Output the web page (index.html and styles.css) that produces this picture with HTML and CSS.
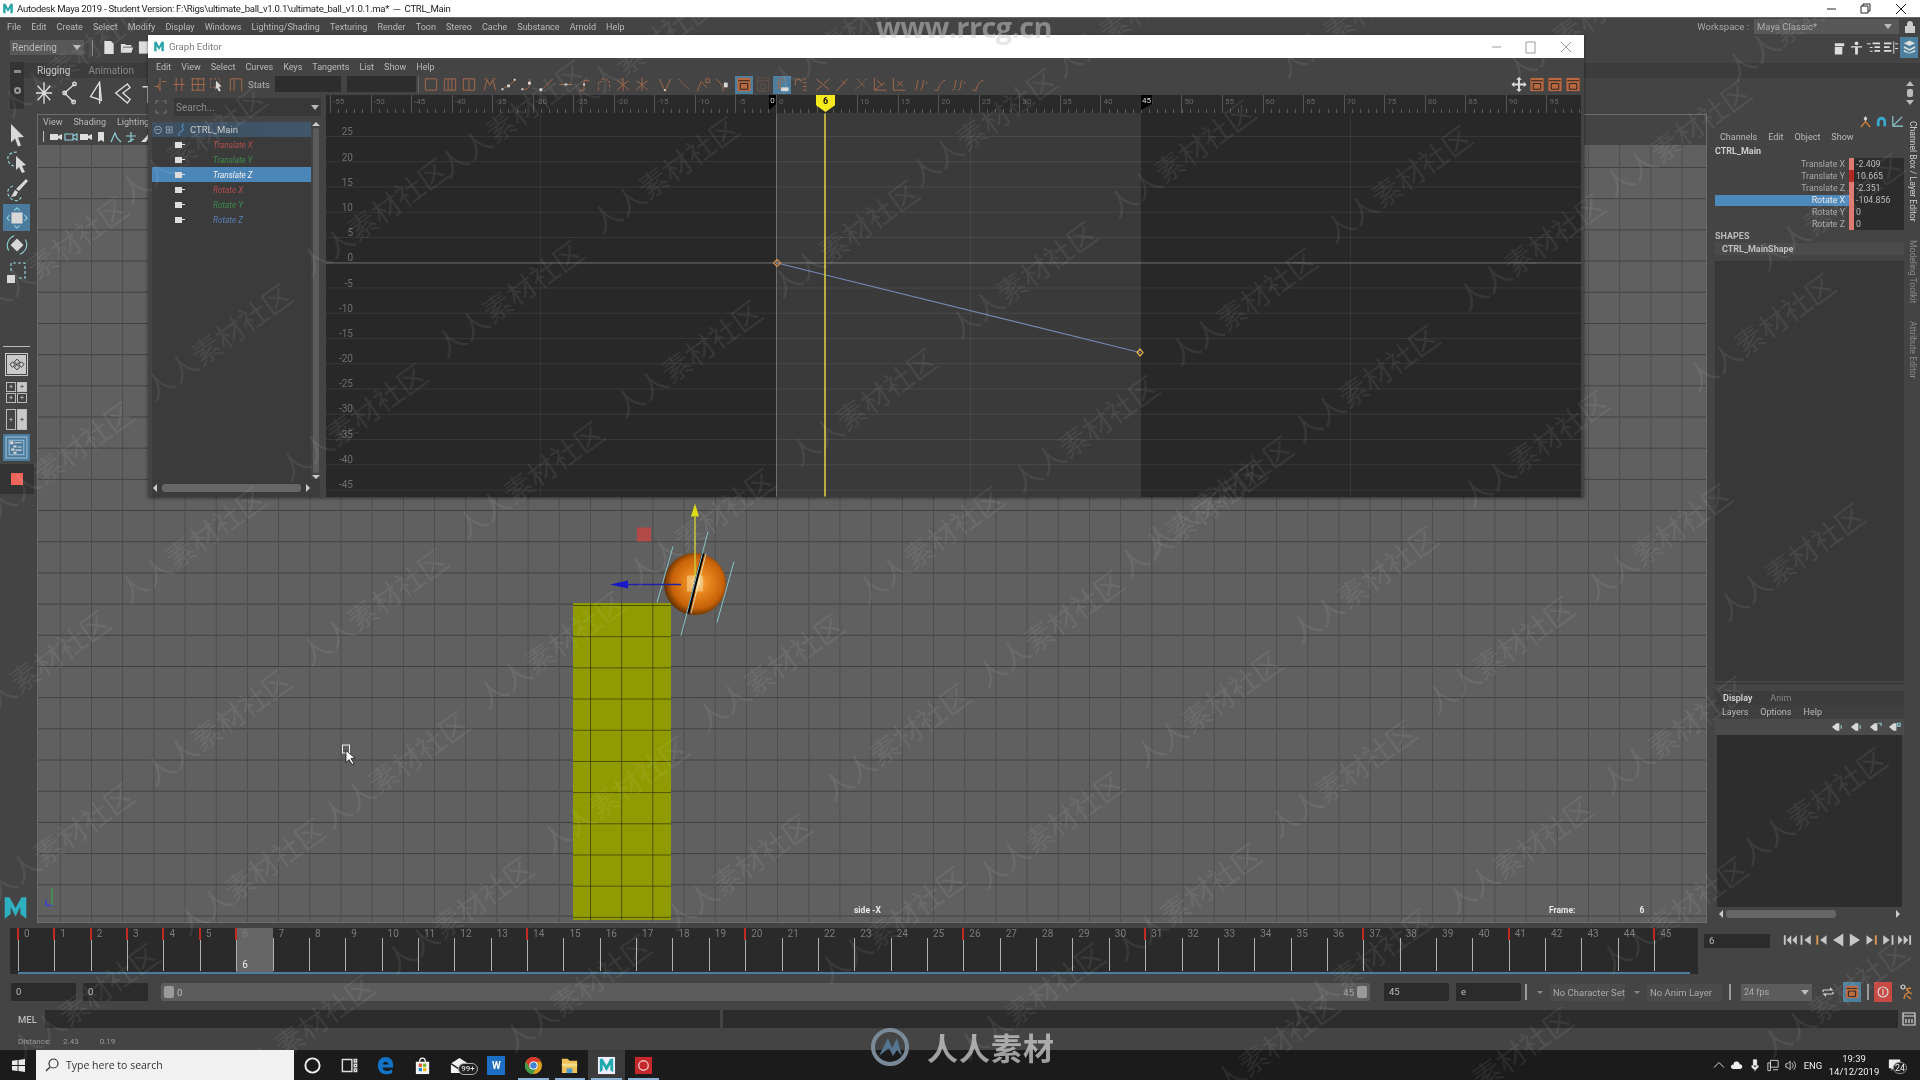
FILE: index.html
```html
<!DOCTYPE html>
<html lang="en">
<head>
<meta charset="utf-8">
<title>Autodesk Maya 2019</title>
<link rel="stylesheet" href="styles.css">
</head>
<body>
<svg class="defs" width="0" height="0">
  <defs>
    <symbol id="maya" viewBox="0 0 20 20"><path d="M2 18V2h4l4 8 4-8h4v16h-4V9l-4 7-4-7v9z"/></symbol>
    <symbol id="a" viewBox="0 0 18 18"><path d="M9 2v14M3 11h5M11 6h5" /><path d="M9 8l-3 3 3 3" /></symbol>
    <symbol id="b" viewBox="0 0 18 18"><path d="M6 2v14M12 2v14M3 9h12"/></symbol>
    <symbol id="c" viewBox="0 0 18 18"><path d="M3 2v14M9 2v14M15 2v14M2 3h14M2 9h14M2 15h14"/></symbol>
    <symbol id="d" viewBox="0 0 18 18"><path d="M2 3h10v9H2z" stroke-dasharray="2 2"/><path class="wf" d="M8 5l6 6-3 .5 2 4-2 1-2-4-1.500 2z"/></symbol>
    <symbol id="e" viewBox="0 0 18 18"><path d="M3 16V3h12v13M7 3v13"/></symbol>
    <symbol id="f" viewBox="0 0 18 18"><path d="M3 3h12v12H3z"/></symbol>
    <symbol id="g" viewBox="0 0 18 18"><path d="M3 3h12v12H3zM7 3v12M11 3v12"/></symbol>
    <symbol id="h" viewBox="0 0 18 18"><path d="M3 3h12v12H3zM9 3v12"/></symbol>
    <symbol id="i" viewBox="0 0 18 18"><path d="M3 15l3-11 3 6 3-6 3 11M3 3h3M12 3h3"/></symbol>
    <symbol id="j" viewBox="0 0 18 18"><path d="M2 14l5-3M10 9l6-5" /><path class="wf" d="M7 9h3v3H7zM1 13h2v2H1zM14 3h2v2h-2z"/></symbol>
    <symbol id="k" viewBox="0 0 18 18"><path d="M2 14h4c3 0 5-3 5-7V3"/><path class="wf" d="M9 6h3v3H9zM2 13h2v2H2z"/></symbol>
    <symbol id="l" viewBox="0 0 18 18"><path d="M3 15L15 3"/><path class="wf" d="M1 13h3v3H1z"/></symbol>
    <symbol id="m" viewBox="0 0 18 18"><path d="M2 9h5M11 9h5"/><path class="wf" d="M7.500 8h3v2h-3z"/></symbol>
    <symbol id="n" viewBox="0 0 18 18"><path d="M3 15h5V5h6"/><path class="wf" d="M7 8h2v2H7z"/></symbol>
    <symbol id="o" viewBox="0 0 18 18"><path d="M3 15V6h4v-3h5v3h3v9" stroke-dasharray="3 2"/></symbol>
    <symbol id="p" viewBox="0 0 18 18"><path d="M9 2v14M3 5l6 4 6-4M3 15l6-6 6 6"/></symbol>
    <symbol id="q" viewBox="0 0 18 18"><path d="M3 3l6 13 6-13"/><path class="wf" d="M8 14h2v2H8z"/></symbol>
    <symbol id="r" viewBox="0 0 18 18"><path d="M3 3l12 12" stroke-dasharray="3 1"/></symbol>
    <symbol id="s" viewBox="0 0 18 18"><path d="M3 16l4-10 7 7M12 3h4v4h-4z"/></symbol>
    <symbol id="t" viewBox="0 0 18 18"><path d="M3 3l7 8v5"/><path class="wf" d="M11 7h4v5h-4z"/></symbol>
    <symbol id="u" viewBox="0 0 18 18"><path d="M3 2h12v14H3z"/><path d="M3 5h12" /><circle cx="9" cy="11" r="3"/></symbol>
    <symbol id="v" viewBox="0 0 18 18"><path d="M5 14V6c0-5 7-5 7 0M7 14V7c0-2 3-2 3 0"/><path class="wf" d="M8 12h8v4H8z"/></symbol>
    <symbol id="w" viewBox="0 0 18 18"><path d="M3 10V6c0-4 6-4 6 0M11 3h4M11 7h4M11 11h4M11 15h4"/></symbol>
    <symbol id="x" viewBox="0 0 18 18"><path d="M2 3l14 12M2 15l6-5M10 8l6-5"/></symbol>
    <symbol id="y" viewBox="0 0 18 18"><path d="M3 16L15 3M9 5l4 4"/></symbol>
    <symbol id="z" viewBox="0 0 18 18"><path d="M3 15L15 3M5 3l8 9" stroke-dasharray="2 1"/></symbol>
    <symbol id="a2" viewBox="0 0 18 18"><path d="M3 2v13h13M3 15l11-8M6 5l6 5"/></symbol>
    <symbol id="a3" viewBox="0 0 18 18"><path d="M3 2v13h13M7 5l6 6M13 5l-6 6"/></symbol>
    <symbol id="a4" viewBox="0 0 18 18"><path d="M2 15c4 0 2-11 5-11M8 15c4 0 2-11 5-11M15 6v2"/></symbol>
    <symbol id="a5" viewBox="0 0 18 18"><path d="M3 15h4c1-6 3-7 5-9l3-2"/></symbol>
    <symbol id="a6" viewBox="0 0 18 18"><path class="of" d="M2 2h14v14H2z"/><path class="bk" d="M3 5h12M5 8h8v6H5z"/></symbol>
  </defs>
</svg>
<div class="app">
  <header class="titlebar">
    <svg class="ico-m"><use href="#maya"/></svg>
    <span class="title-text">Autodesk Maya 2019 - Student Version: F:\Rigs\ultimate_ball_v1.0.1\ultimate_ball_v1.0.1.ma*&nbsp; ---&nbsp; CTRL_Main</span>
    <span class="winbtns">
      <svg width="34" height="14" viewBox="0 0 34 14"><path d="M12 7h9"/></svg>
      <svg width="34" height="14" viewBox="0 0 34 14"><path d="M12 4h7v7h-7zM14 4V2h7v7h-2"/></svg>
      <svg width="36" height="14" viewBox="0 0 36 14"><path d="M13 2l10 10M23 2L13 12"/></svg>
    </span>
  </header>
  <nav class="menubar">
    <span>File</span><span>Edit</span><span>Create</span><span>Select</span><span>Modify</span><span>Display</span><span>Windows</span><span>Lighting/Shading</span><span>Texturing</span><span>Render</span><span>Toon</span><span>Stereo</span><span>Cache</span><span>Substance</span><span>Arnold</span><span>Help</span>
    <div class="workspace">
      <span>Workspace :</span>
      <span class="ws-drop">Maya Classic*<i class="caret"></i></span>
      <svg class="lock" width="12" height="14" viewBox="0 0 12 14"><path d="M3 6V4c0-4 6-4 6 0v2h2v7H1V6z"/></svg>
    </div>
  </nav>
  <section class="status">
    <span class="drop">Rendering<i class="caret"></i></span>
    <i class="vsep"></i>
    <svg class="st-ico" viewBox="0 0 14 16"><path d="M2 1h7l3 3v11H2z"/></svg>
    <svg class="st-ico" viewBox="0 0 16 16"><path d="M1 4h5l1 1h6v2H4l-2 7H1zM4 8h11l-2 6H2z"/></svg>
    <svg class="st-ico" viewBox="0 0 16 16"><path d="M1 1h14v14H1z"/></svg>
    <div class="st-right">
      <svg class="sr-ico" viewBox="0 0 16 16"><path d="M3 3h10v3H3zM3 7h8v8H3z"/></svg>
      <svg class="sr-ico" viewBox="0 0 16 16"><circle cx="8" cy="3" r="2"/><path d="M2 6h12v1.500H9.500V15h-3V7.500H2z"/></svg>
      <svg class="sr-ico" viewBox="0 0 16 16"><path d="M1 3h4v1H1zM7 2h8v2H7zM4 7h3v1H4zM9 6h6v2H9zM7 11h-3v1h3zM9 10h6v2H9z"/></svg>
      <svg class="sr-ico" viewBox="0 0 16 16"><path d="M1 2h8v2H1zM1 6h6v2H1zM1 10h8v2H1zM11 1h1v13h-1zM13 3h3v1h-3zM13 8h3v1h-3z"/></svg>
      <span class="sr-on"><svg class="sr-ico" viewBox="0 0 16 16"><path d="M8 1l6 3-6 3-6-3zM2 7l6 3 6-3v2l-6 3-6-3zM2 11l6 3 6-3v2l-6 2-6-2z"/></svg></span>
    </div>
  </section>
  <section class="shelf">
    <div class="shelf-handle"><i></i><b></b></div>
    <div class="shelf-main">
      <div class="shelf-tabs"><span class="tab-on">Rigging</span><span>Animation</span><span>Rendering</span></div>
      <div class="shelf-icons">
        <svg viewBox="0 0 20 26"><path d="M10 1v24M1 13h18M3 5l14 16M17 5L3 21"/></svg>
        <svg viewBox="0 0 20 26"><path d="M15 3L4 13l10 10"/><circle cx="4" cy="13" r="2"/><circle cx="15" cy="3" r="2"/><circle cx="14" cy="23" r="2"/></svg>
        <svg viewBox="0 0 20 26"><path d="M14 1L4 17l12 4zM14 1v24"/></svg>
        <svg viewBox="0 0 20 26"><path d="M16 3L3 13l13 11 3-4-8-7 8-6z"/></svg>
        <svg viewBox="0 0 20 26"><path d="M4 6h12M10 6v18"/></svg>
      </div>
      <div class="shelf-end">
        <svg width="10" height="26" viewBox="0 0 10 26"><path d="M5 1l4 5H1zM5 25l4-5H1z"/><rect x="2" y="9" width="6" height="8" rx="2"/></svg>
      </div>
    </div>
  </section>

  <main class="main">
    <aside class="toolbox">
      <div class="tool"><svg viewBox="0 0 20 26"><path class="wf" d="M4 2l13 13-6 .5 3 8-3 1-3-8-4 4z"/></svg></div>
      <div class="tool"><svg viewBox="0 0 24 26"><path class="cy" d="M12 3c-7 0-10 4-9 8s4 6 6 6" stroke-dasharray="3 2"/><path class="wf" d="M11 7l10 9-4 1 3 6-3 1-3-6-3 3z"/></svg></div>
      <div class="tool"><svg viewBox="0 0 24 26"><path class="cy" d="M8 9c-7 2-7 10 0 14 5 2 8-1 8-3" stroke-dasharray="3 2"/><path class="wf" d="M21 2l2 2-9 10-3-2zM10 13l3 2-2 4-5 1z"/></svg></div>
      <div class="tool tool-on"><svg viewBox="0 0 26 26"><path class="wf" d="M7 7h12v12H7z"/><path class="cy" d="M10 5l3-3 3 3M10 21l3 3 3-3M5 10l-3 3 3 3M21 10l3 3-3 3"/></svg></div>
      <div class="tool"><svg viewBox="0 0 26 26"><path class="wf" d="M13 6l7 7-7 7-7-7z"/><path class="cy" d="M4 19a11 11 0 0 1 6-16M22 7a11 11 0 0 1-6 16"/></svg></div>
      <div class="tool"><svg viewBox="0 0 24 26"><path class="wf" d="M2 15h8v8H2z"/><path class="cy" d="M6 11V3h14v15h-7" stroke-dasharray="3 2"/></svg></div>
      <i class="tb-sep"></i>
      <div class="pane pane-one"><svg viewBox="0 0 18 12"><path class="bk" d="M9 0l3 3-3 3-3-3zM4 3l3 3-3 3-3-3zM14 3l3 3-3 3-3-3zM9 6l3 3-3 3-3-3z"/></svg></div>
      <div class="pane-four"><i>+</i><b>+</b><i>+</i><i>+</i></div>
      <div class="pane-two"><i>+</i><b>+</b></div>
      <div class="tool-out"><svg viewBox="0 0 22 22"><path class="ol-frame" d="M1 1h20v20H1zM4 4h14v14H4z"/><path class="wf" d="M5 5h3v3H5zM9 6h7v1H9zM8 9h3v2H8zM12 10h4v1h-4zM6 12h3v2H6zM10 13h6v1h-6zM8 15h3v2H8z"/></svg></div>
      <div class="tb-rec"><i></i></div>
      <svg class="logo-m" viewBox="0 0 20 20"><path d="M1 19V1h4l5 9 5-9h4v18l-5-4V9l-4 8-4-8v6z"/></svg>
    </aside>

    <section class="viewport">
      <div class="vp-head">
        <div class="vp-menu"><span>View</span><span>Shading</span><span>Lighting</span></div>
        <div class="vp-tools">
          <i class="vsep2"></i>
          <svg viewBox="0 0 14 12"><path d="M1 3h8v6H1zM9 5l4-2v6l-4-2z"/></svg>
          <svg viewBox="0 0 14 12"><path class="cy" d="M1 3h8v6H1zM9 5l4-2v6l-4-2z"/></svg>
          <svg viewBox="0 0 14 12"><path d="M1 3h8v6H1zM9 5l4-2v6l-4-2z"/></svg>
          <svg viewBox="0 0 14 12"><path d="M4 1h6v10L7 9l-3 2z"/></svg>
          <svg viewBox="0 0 14 12"><path class="cy" d="M2 11l4-9 2 5 4 4"/></svg>
          <svg viewBox="0 0 14 12"><path class="cy" d="M7 1v10M2 5h10M4 11l6-3"/></svg>
          <svg viewBox="0 0 14 12"><path d="M2 11l4-4 5-6 1 3-5 7z"/></svg>
        </div>
      </div>
      <div class="vp-body">
        <div class="cube"></div>
        <svg class="scene" viewBox="38 145 1668 776">
          <defs>
            <radialGradient id="ball" cx="0.54" cy="0.48" r="0.55">
              <stop offset="0" stop-color="#f7d58a"/><stop offset=".25" stop-color="#ee8f22"/><stop offset=".75" stop-color="#c76208"/><stop offset="1" stop-color="#5a2c00"/>
            </radialGradient>
          </defs>
          <rect x="637" y="527" width="14" height="14" fill="#b24a48"/>
          <circle cx="695" cy="583.500" r="31" fill="url(#ball)"/>
          <rect x="687" y="575" width="16" height="16" fill="#f8d9a0" fill-opacity=".55"/>
          <path d="M703 553l-15 60" stroke="#000" stroke-width="3"/>
          <path d="M706 553l-15 60" stroke="#dfe" stroke-width="1" opacity=".7"/>
          <path d="M673 546l-16 56M708 531l-27 104M734 561l-17 61" stroke="#86c5c9" stroke-width="1" fill="none"/>
          <path d="M695 516v60" stroke="#c9c834" stroke-width="1.500"/>
          <path d="M695 503l-4 13h8z" fill="#dcdc16"/>
          <path d="M626 584h55" stroke="#2121a8" stroke-width="1.500"/>
          <path d="M610 584l18-4v8z" fill="#1818c8"/>
          <path d="M52 887v18" stroke="#3c9a4c" stroke-width="1.500"/>
          <path d="M52 905H46v-6" stroke="#3f3fd0" stroke-width="1.500" fill="none"/>
          <rect x="342.500" y="744.500" width="7" height="8" fill="none" stroke="#eee"/>
          <path d="M346 750l0 12 3-3 3 5 2-1-3-5 4-.5z" fill="#fff" stroke="#000" stroke-width=".7"/>
        </svg>
        <span class="vp-cam">side -X</span>
        <span class="vp-frame"><b>Frame:</b><b>6</b></span>
      </div>
    </section>

    <aside class="panel">
      <div class="cb-icons">
        <svg viewBox="0 0 14 14"><path class="wf" d="M7 1l2 3-2 3-2-3z"/><path class="or" d="M2 13l5-6 5 6"/></svg>
        <svg viewBox="0 0 14 14"><path class="cy2" d="M2 12V7a5 5 0 0 1 10 0v5h-3V7a2 2 0 0 0-4 0v5z"/></svg>
        <svg viewBox="0 0 14 14"><path class="cy" d="M2 1v11h11M3 11l9-9"/></svg>
      </div>
      <div class="cb-menu"><span>Channels</span><span>Edit</span><span>Object</span><span>Show</span></div>
      <div class="cb-name">CTRL_Main</div>
      <div class="cb-rows">
        <div class="cb-row"><span class="cb-l">Translate X</span><i class="sw"></i><span class="cb-v">-2.409</span></div>
        <div class="cb-row"><span class="cb-l">Translate Y</span><i class="sw sw-d"></i><span class="cb-v">10.665</span></div>
        <div class="cb-row"><span class="cb-l">Translate Z</span><i class="sw"></i><span class="cb-v">-2.351</span></div>
        <div class="cb-row cb-sel"><span class="cb-l">Rotate X</span><i class="sw"></i><span class="cb-v">-104.856</span></div>
        <div class="cb-row"><span class="cb-l">Rotate Y</span><i class="sw"></i><span class="cb-v">0</span></div>
        <div class="cb-row"><span class="cb-l">Rotate Z</span><i class="sw"></i><span class="cb-v">0</span></div>
      </div>
      <div class="cb-shapes">SHAPES</div>
      <div class="cb-shape">CTRL_MainShape</div>
      <div class="cb-empty"></div>
      <div class="le">
        <div class="le-tabs"><span class="le-on">Display</span><span>Anim</span></div>
        <div class="le-menu"><span>Layers</span><span>Options</span><span>Help</span></div>
        <div class="le-icons">
          <svg viewBox="0 0 14 10"><path class="wf" d="M1 5l5-4h3v8H6z"/><path class="cy" d="M11 3v4"/></svg>
          <svg viewBox="0 0 14 10"><path class="wf" d="M1 5l5-4h3v8H6z"/><path class="cy" d="M11 3v4"/></svg>
          <svg viewBox="0 0 14 10"><path class="wf" d="M1 5l5-4h3v8H6z"/><path class="cy" d="M10 1h3v3"/></svg>
          <svg viewBox="0 0 14 10"><path class="wf" d="M1 5l5-4h3v8H6z"/><path class="cy" d="M10 1h3v3h-3z"/></svg>
        </div>
        <div class="le-list"></div>
        <div class="le-scroll"><i class="arr-l"></i><b></b><i class="arr-r"></i></div>
      </div>
    </aside>

    <aside class="vtabs"><span class="vt-on">Channel Box / Layer Editor</span><span>Modeling Toolkit</span><span>Attribute Editor</span></aside>
  </main>

  <section class="timerow">
    <div class="slider">
      <div class="f k"><em>0</em></div><div class="f k"><em>1</em></div><div class="f k"><em>2</em></div><div class="f k"><em>3</em></div><div class="f k"><em>4</em></div><div class="f k"><em>5</em></div><div class="f k cur"><em>6</em><u>6</u></div><div class="f"><em>7</em></div><div class="f"><em>8</em></div><div class="f"><em>9</em></div><div class="f"><em>10</em></div><div class="f"><em>11</em></div><div class="f"><em>12</em></div><div class="f"><em>13</em></div><div class="f k"><em>14</em></div><div class="f"><em>15</em></div><div class="f"><em>16</em></div><div class="f"><em>17</em></div><div class="f"><em>18</em></div><div class="f"><em>19</em></div><div class="f k"><em>20</em></div><div class="f"><em>21</em></div><div class="f"><em>22</em></div><div class="f"><em>23</em></div><div class="f"><em>24</em></div><div class="f"><em>25</em></div><div class="f k"><em>26</em></div><div class="f"><em>27</em></div><div class="f"><em>28</em></div><div class="f"><em>29</em></div><div class="f"><em>30</em></div><div class="f k"><em>31</em></div><div class="f"><em>32</em></div><div class="f"><em>33</em></div><div class="f"><em>34</em></div><div class="f"><em>35</em></div><div class="f"><em>36</em></div><div class="f k"><em>37</em></div><div class="f"><em>38</em></div><div class="f"><em>39</em></div><div class="f"><em>40</em></div><div class="f k"><em>41</em></div><div class="f"><em>42</em></div><div class="f"><em>43</em></div><div class="f"><em>44</em></div><div class="f k"><em>45</em></div>
    </div>
    <div class="playback">
      <span class="fld frame-fld">6</span>
      <svg class="pb" viewBox="0 0 140 16">
        <path d="M2 3h2v10H2zM10 3v10L5 8zM16 3v10l-5-5zM19 3h0z"/>
        <path d="M20 3h2v10h-2zM31 3v10l-7-5z"/>
        <path class="pb-o" d="M37 3h2v10h-2z"/><path d="M48 3v10l-7-5z"/>
        <path d="M66 1v14l-11-7z"/>
        <path d="M73 1v14l11-7z"/>
        <path d="M91 3v10l7-5z"/><path class="pb-o" d="M100 3h2v10h-2z"/>
        <path d="M109 3v10l7-5zM118 3h2v10h-2z"/>
        <path d="M125 3v10l5-5zM131 3v10l5-5zM137 3h2v10h-2z"/>
      </svg>
    </div>
  </section>

  <section class="rangerow">
    <span class="fld w65">0</span>
    <span class="fld w65">0</span>
    <div class="range"><i class="hd"></i><span>0</span><span class="range-end">45</span><i class="hd"></i></div>
    <span class="fld w65">45</span>
    <span class="fld w65">e</span>
    <i class="rsep rsep-a"></i><i class="mini mini-a"></i>
    <span class="lbl-box">No Character Set</span><i class="mini mini-b"></i>
    <span class="lbl-box">No Anim Layer</span>
    <i class="rsep"></i>
    <span class="fps">24 fps<i class="caret"></i></span>
    <svg class="rg-ico rg-loop" viewBox="0 0 16 16"><path class="wline" d="M3 6h9l-2-2M13 10H4l2 2M3 6v2M13 8v2"/></svg>
    <span class="rg-blue"><svg class="rg-ico" viewBox="0 0 18 18"><use href="#a6"/></svg></span>
    <i class="rsep rsep-c"></i>
    <span class="rg-red"><svg class="rg-ico" viewBox="0 0 16 16"><circle class="wline" cx="8" cy="8" r="5"/><path class="wline" d="M8 5v6"/></svg></span>
    <svg class="rg-ico" viewBox="0 0 16 16"><circle cx="4" cy="3" r="2" class="wline"/><path class="or" d="M7 5l3 3-4 3-1 4M10 8l3 2M7 5l5-1M8 12l4 3"/></svg>
  </section>

  <section class="cmdrow">
    <span class="mel">MEL</span>
    <div class="cmd-in"></div><div class="cmd-out"></div>
    <svg class="rg-ico" viewBox="0 0 16 16"><path class="wline" d="M2 2h12v12H2zM2 5h12M5 8v4M8 8v4M11 8v4"/></svg>
  </section>

  <section class="helprow"><span>Distance:</span><span>2.43</span><span>0.19</span></section>

  <footer class="taskbar">
    <svg class="tb-win" viewBox="0 0 14 14"><path d="M0 2l6-1v5.500H0zM7 1l7-1v6.500H7zM0 7.500h6V13l-6-1zM7 7.500h7V14l-7-1z"/></svg>
    <div class="tb-search">
      <svg width="14" height="14" viewBox="0 0 14 14"><circle cx="8.500" cy="5.500" r="4.500"/><path d="M5 9l-4 4"/></svg>
      <span>Type here to search</span>
    </div>
    <div class="tb-apps">
      <span class="app-i"><svg viewBox="0 0 16 16"><circle cx="8" cy="8" r="6" fill="none" stroke="#eee" stroke-width="1.600"/></svg></span>
      <span class="app-i"><svg viewBox="0 0 16 16"><path d="M2 3h8v10H2zM12 3h2v2h-2zM12 7h2v2h-2zM12 11h2v2h-2z" fill="none" stroke="#ddd" stroke-width="1.200"/></svg></span>
      <span class="app-i"><svg viewBox="0 0 20 20"><path d="M2 10C2 4 6 1 10 1c5 0 8 3 8 9v2H7c0 4 6 5 10 2v4c-6 3-15 1-15-8zm5-1h6c0-4-5-4-6 0z" fill="#1174c8"/></svg></span>
      <span class="app-i"><svg viewBox="0 0 20 20"><path d="M3 6h14v13H3z" fill="#f4f4f4"/><path d="M7 6c0-5 6-5 6 0" fill="none" stroke="#f4f4f4" stroke-width="1.500"/><path d="M6 8h3.500v3.500H6z" fill="#e4572e"/><path d="M10.500 8H14v3.500h-3.500z" fill="#7cb82f"/><path d="M6 12.500h3.500V16H6z" fill="#1e88d6"/><path d="M10.500 12.500H14V16h-3.500z" fill="#f4b400"/></svg></span>
      <span class="app-i app-mail"><svg viewBox="0 0 20 20"><path d="M1 8l9-6 9 6v10H1z" fill="#f2f2f2"/><path d="M1 8l9 6 9-6" fill="none" stroke="#222" stroke-width="1.500"/></svg><b>99+</b></span>
      <span class="app-i app-word"><b>W</b></span>
      <span class="app-i on"><svg viewBox="0 0 20 20"><circle cx="10" cy="10" r="9" fill="#e0a020"/><path d="M10 1a9 9 0 0 0-8 5l4 7 4-7h8a9 9 0 0 0-8-5z" fill="#d63a2f"/><path d="M2 6a9 9 0 0 0 7 13l4-6-7 0z" fill="#3c9a4a"/><circle cx="10" cy="10" r="4" fill="#3d83d8" stroke="#fff" stroke-width="1"/></svg></span>
      <span class="app-i on"><svg viewBox="0 0 20 20"><path d="M2 3h6l2 2h8v13H2z" fill="#eec055"/><path d="M2 8h16v3H2z" fill="#f6dc8c"/><path d="M7 13h6v5H7z" fill="#4a9ad0"/></svg></span>
      <span class="app-i on app-act"><svg viewBox="0 0 20 20"><path d="M1 1h18v18H1z" fill="#eef"/><path d="M3 17V3h3l4 7 4-7h3v14l-3-2V9l-4 7-4-7v6z" fill="#1faab0"/></svg></span>
      <span class="app-i on"><svg viewBox="0 0 20 20"><path d="M1 1h18v18H1z" fill="#c5282a"/><circle cx="10" cy="10" r="5" fill="none" stroke="#f2c4c4" stroke-width="1.400"/></svg></span>
    </div>
    <div class="tray">
      <svg viewBox="0 0 12 12"><path d="M1 8l5-5 5 5" fill="none" stroke="#ddd"/></svg>
      <svg viewBox="0 0 14 12"><path d="M2 10a2.500 2.500 0 0 1 1-5 3.500 3.500 0 0 1 7-.5A2.800 2.800 0 0 1 11 10z" fill="#eee"/></svg>
      <svg viewBox="0 0 10 16"><path d="M3 1h4v9H3zM1 8c0 6 8 6 8 0M5 12v3" fill="#eee" stroke="#eee"/></svg>
      <svg viewBox="0 0 14 14"><path d="M4 1h9v8H4zM1 4h3v9H1zM7 12h6" fill="none" stroke="#ddd"/></svg>
      <svg viewBox="0 0 14 14"><path d="M1 5h2l3-3v10L3 9H1zM8 4c2 2 2 4 0 6M10 2c3 3 3 7 0 10" fill="none" stroke="#ddd"/></svg>
      <span class="eng">ENG</span>
      <span class="clock"><span>19:39</span><span>14/12/2019</span></span>
      <span class="notif"><svg viewBox="0 0 16 16"><path d="M1 1h13v10H6l-2 3v-3H1z" fill="#eee"/></svg><b>24</b></span>
    </div>
  </footer>

  <section class="ge">
    <div class="ge-title">
      <svg class="ico-m"><use href="#maya"/></svg>
      <span>Graph Editor</span>
      <span class="ge-btns">
        <svg width="34" height="14" viewBox="0 0 34 14"><path d="M12 7h9"/></svg>
        <svg width="34" height="14" viewBox="0 0 34 14"><path d="M12 2h9v11h-9z"/></svg>
        <svg width="36" height="14" viewBox="0 0 36 14"><path d="M13 2l10 10M23 2L13 12"/></svg>
      </span>
    </div>
    <div class="ge-menu"><span>Edit</span><span>View</span><span>Select</span><span>Curves</span><span>Keys</span><span>Tangents</span><span>List</span><span>Show</span><span>Help</span></div>
    <div class="ge-tools">
      <svg><use href="#a"/></svg><svg><use href="#b"/></svg><svg><use href="#c"/></svg><svg><use href="#d"/></svg><svg><use href="#e"/></svg>
      <span class="ge-stats">Stats</span><i class="ge-f1"></i><i class="ge-f2"></i><i class="g-sep"></i>
      <svg><use href="#f"/></svg><svg><use href="#g"/></svg><svg><use href="#h"/></svg>
      <svg class="g4"><use href="#i"/></svg><svg><use href="#j"/></svg><svg><use href="#k"/></svg><svg><use href="#l"/></svg><svg><use href="#m"/></svg><svg><use href="#n"/></svg><svg><use href="#o"/></svg><svg><use href="#p"/></svg><svg><use href="#p"/></svg>
      <svg class="g7"><use href="#q"/></svg><svg><use href="#r"/></svg><svg><use href="#s"/></svg><svg><use href="#t"/></svg>
      <span class="g-on g5"><svg><use href="#a6"/></svg></span><svg class="g-dim"><use href="#u"/></svg><span class="g-on"><svg><use href="#v"/></svg></span><svg><use href="#w"/></svg>
      <svg class="g5"><use href="#x"/></svg><svg><use href="#y"/></svg><svg><use href="#z"/></svg><svg><use href="#a2"/></svg><svg><use href="#a3"/></svg>
      <svg class="g5"><use href="#a4"/></svg><svg><use href="#a5"/></svg><svg><use href="#a4"/></svg><svg><use href="#a5"/></svg>
      <div class="ge-tools-r">
        <svg class="wmove" viewBox="0 0 18 18"><path d="M9 1l3 3h-2v4h4V6l3 3-3 3v-2h-4v4h2l-3 3-3-3h2v-4H4v2L1 9l3-3v2h4V4H6z"/></svg>
        <svg><use href="#a6"/></svg><svg><use href="#a6"/></svg><svg><use href="#a6"/></svg>
      </div>
    </div>
    <div class="ge-body">
      <div class="outl">
        <div class="search"><svg width="12" height="14" viewBox="0 0 12 14"><path d="M1 4V1h3M8 1h3v3M11 10v3H8M4 13H1v-3" fill="none" stroke="#777"/></svg><span class="s-in">Search...<i class="caret"></i></span></div>
        <div class="ol-wrap">
          <div class="ol-list">
            <div class="ol-head"><i class="ex">&#8854;</i><i class="ex">&#8862;</i><svg width="10" height="14" viewBox="0 0 10 14"><path d="M7 1C2 3 9 6 5 8S1 12 3 13" fill="none" stroke="#5aa7d6"/></svg><span>CTRL_Main</span></div>
            <div class="ol-row tx"><i class="plug"></i><span>Translate X</span></div>
            <div class="ol-row ty"><i class="plug"></i><span>Translate Y</span></div>
            <div class="ol-row tz"><i class="plug"></i><span>Translate Z</span></div>
            <div class="ol-row tx"><i class="plug"></i><span>Rotate X</span></div>
            <div class="ol-row ty"><i class="plug"></i><span>Rotate Y</span></div>
            <div class="ol-row rz"><i class="plug"></i><span>Rotate Z</span></div>
          </div>
          <div class="ol-vs"><i class="arr-u"></i><b></b><i class="arr-d"></i></div>
        </div>
        <div class="ol-hs"><i class="arr-l"></i><b></b><i class="arr-r"></i></div>
      </div>
      <div class="graph">
        <div class="ruler">
          <span>-55</span><span>-50</span><span>-45</span><span>-40</span><span>-35</span><span>-30</span><span>-25</span><span>-20</span><span>-15</span><span>-10</span><span>-5</span><span>0</span><span>5</span><span>10</span><span>15</span><span>20</span><span>25</span><span>30</span><span>35</span><span>40</span><span>45</span><span>50</span><span>55</span><span>60</span><span>65</span><span>70</span><span>75</span><span>80</span><span>85</span><span>90</span><span>95</span>
          <b class="tag tag0">0</b><b class="tag tag45">45</b><b class="marker">6</b>
        </div>
        <div class="plot">
          <div class="yaxis"><span>25</span><span>20</span><span>15</span><span>10</span><span>5</span><span>0</span><span>-5</span><span>-10</span><span>-15</span><span>-20</span><span>-25</span><span>-30</span><span>-35</span><span>-40</span><span>-45</span></div>
          <svg class="curve" viewBox="326 113 1255 383">
            <path d="M776.500 113v383" stroke="#707070"/>
            <path d="M970.500 113v383M540.500 113v383M1350.500 113v383" stroke="#fff" stroke-opacity=".06"/>
            <path d="M326 262.500h1255" stroke="#fff" stroke-opacity=".28"/>
            <path d="M777 262.500L1140 352" stroke="#7289b4" stroke-width="1.200"/>
            <path d="M825 113v383" stroke="#dccb3c" stroke-width="1.600"/>
            <path d="M777 259l3.500 3.500-3.500 3.500-3.500-3.500z" fill="none" stroke="#d9904a" stroke-width="1.200"/>
            <path d="M1140 348.500l3 3.500-3 3.500-3-3.500z" fill="none" stroke="#e5b04a" stroke-width="1.200"/>
          </svg>
        </div>
      </div>
    </div>
  </section>

  <svg class="wm" viewBox="0 0 1920 1080" aria-hidden="true">
    <g class="wm-g">
      <text transform="translate(73 57) rotate(-36)">人人素材社区</text><text transform="translate(192 143) rotate(-36)">人人素材社区</text><text transform="translate(373 215) rotate(-36)">人人素材社区</text><text transform="translate(53 253) rotate(-36)">人人素材社区</text><text transform="translate(508 297) rotate(-36)">人人素材社区</text><text transform="translate(217 340) rotate(-36)">人人素材社区</text><text transform="translate(687 357) rotate(-36)">人人素材社区</text><text transform="translate(352 420) rotate(-36)">人人素材社区</text><text transform="translate(59 458) rotate(-36)">人人素材社区</text><text transform="translate(529 478) rotate(-36)">人人素材社区</text><text transform="translate(191 543) rotate(-36)">人人素材社区</text><text transform="translate(700 525) rotate(-36)">人人素材社区</text><text transform="translate(373 605) rotate(-36)">人人素材社区</text><text transform="translate(35 667) rotate(-36)">人人素材社区</text><text transform="translate(550 648) rotate(-36)">人人素材社区</text><text transform="translate(929 543) rotate(-36)">人人素材社区</text><text transform="translate(1191 517) rotate(-36)">人人素材社区</text><text transform="translate(1049 627) rotate(-36)">人人素材社区</text><text transform="translate(1363 583) rotate(-36)">人人素材社区</text><text transform="translate(1657 540) rotate(-36)">人人素材社区</text><text transform="translate(217 725) rotate(-36)">人人素材社区</text><text transform="translate(394 768) rotate(-36)">人人素材社区</text><text transform="translate(614 793) rotate(-36)">人人素材社区</text><text transform="translate(769 670) rotate(-36)">人人素材社区</text><text transform="translate(895 740) rotate(-36)">人人素材社区</text><text transform="translate(1207 707) rotate(-36)">人人素材社区</text><text transform="translate(1499 653) rotate(-36)">人人素材社区</text><text transform="translate(1673 733) rotate(-36)">人人素材社区</text><text transform="translate(1341 777) rotate(-36)">人人素材社区</text><text transform="translate(59 840) rotate(-36)">人人素材社区</text><text transform="translate(250 875) rotate(-36)">人人素材社区</text><text transform="translate(458 913) rotate(-36)">人人素材社区</text><text transform="translate(737 870) rotate(-36)">人人素材社区</text><text transform="translate(1049 828) rotate(-36)">人人素材社区</text><text transform="translate(1518 853) rotate(-36)">人人素材社区</text><text transform="translate(891 923) rotate(-36)">人人素材社区</text><text transform="translate(1186 900) rotate(-36)">人人素材社区</text><text transform="translate(1673 913) rotate(-36)">人人素材社区</text><text transform="translate(1357 965) rotate(-36)">人人素材社区</text><text transform="translate(84 1000) rotate(-36)">人人素材社区</text><text transform="translate(300 1031) rotate(-36)">人人素材社区</text><text transform="translate(576 991) rotate(-36)">人人素材社区</text><text transform="translate(1834 997) rotate(-36)">人人素材社区</text><text transform="translate(1264 1050) rotate(-36)">人人素材社区</text><text transform="translate(1030 1000) rotate(-36)">人人素材社区</text><text transform="translate(1498 1064) rotate(-36)">人人素材社区</text><text transform="translate(511 117) rotate(-36)">人人素材社区</text><text transform="translate(664 173) rotate(-36)">人人素材社区</text><text transform="translate(844 33) rotate(-36)">人人素材社区</text><text transform="translate(844 237) rotate(-36)">人人素材社区</text><text transform="translate(982 125) rotate(-36)">人人素材社区</text><text transform="translate(1125 17) rotate(-36)">人人素材社区</text><text transform="translate(1180 157) rotate(-36)">人人素材社区</text><text transform="translate(1397 182) rotate(-36)">人人素材社区</text><text transform="translate(1022 278) rotate(-36)">人人素材社区</text><text transform="translate(1242 305) rotate(-36)">人人素材社区</text><text transform="translate(1530 250) rotate(-36)">人人素材社区</text><text transform="translate(862 405) rotate(-36)">人人素材社区</text><text transform="translate(1084 432) rotate(-36)">人人素材社区</text><text transform="translate(1364 382) rotate(-36)">人人素材社区</text><text transform="translate(1534 447) rotate(-36)">人人素材社区</text><text transform="translate(1218 493) rotate(-36)">人人素材社区</text><text transform="translate(1349 17) rotate(-36)">人人素材社区</text><text transform="translate(1578 23) rotate(-36)">人人素材社区</text><text transform="translate(1676 137) rotate(-36)">人人素材社区</text><text transform="translate(1798 20) rotate(-36)">人人素材社区</text><text transform="translate(1829 210) rotate(-36)">人人素材社区</text><text transform="translate(1760 330) rotate(-36)">人人素材社区</text><text transform="translate(1812 804) rotate(-36)">人人素材社区</text><text transform="translate(1790 560) rotate(-36)">人人素材社区</text><text transform="translate(640 50) rotate(-36)">人人素材社区</text>
    </g>
  </svg>
  <div class="stamp-url">www.rrcg.cn</div>
  <div class="stamp-brand">
    <svg width="44" height="42" viewBox="0 0 44 42"><circle cx="22" cy="21" r="17" fill="none" stroke="#7b8a98" stroke-width="4"/><path d="M11 30l9-18 4 10 5-10 5 18-5-6-4 6-4-8z" fill="#54748f"/></svg>
    <span>人人素材</span>
  </div>
</div>
</body>
</html>
```

FILE: styles.css
```css
* { box-sizing: border-box; }
html, body { margin: 0; height: 100%; overflow: hidden; background: #444; }
body { font-family: Roboto, "Liberation Sans", "Noto Sans CJK SC", sans-serif; font-size: 9px; color: #b9b9b9; }
i, em, u { font-style: normal; text-decoration: none; }
.defs { position: absolute; }
.app { position: relative; width: 1920px; height: 1080px; display: flex; flex-direction: column; background: #444; overflow: hidden; filter: blur(.35px); }

/* shared icon paints */
.wf { fill: #d8d8d8; stroke: none; }
.cy { fill: none; stroke: #8fd0d8; stroke-width: 1.2; }
.cy2 { fill: #39a9c9; stroke: none; }
.or { fill: none; stroke: #d9843c; stroke-width: 1.4; }
.bk { fill: none; stroke: #222; }
.of { fill: #b9683f; stroke: none; }
.wline { fill: none; stroke: #d8d8d8; stroke-width: 1.2; }
.caret { width: 0; height: 0; border-left: 4px solid transparent; border-right: 4px solid transparent; border-top: 5px solid #bbb; }
.fld { background: #2b2b2b; color: #bbb; height: 18px; line-height: 18px; padding-left: 5px; border-radius: 1px; flex: none; font-size: 9.5px; }
.w65 { width: 65px; }

/* title bar */
.titlebar { height: 17px; flex: none; background: #fff; display: flex; align-items: center; color: #222; padding-left: 2px; }
.ico-m { width: 12px; height: 13px; fill: #27a3a8; flex: none; }
.title-text { margin-left: 3px; font-size: 9.6px; letter-spacing: -.28px; white-space: nowrap; }
.winbtns { margin-left: auto; display: flex; margin-right: 1px; }
.winbtns svg { fill: none; stroke: #222; }

/* menu bar */
.menubar { height: 18px; flex: none; display: flex; align-items: center; padding-left: 7px; gap: 10.1px; border-top: 1px solid #666; white-space: nowrap; background: #444; }
.workspace { margin-left: auto; display: flex; align-items: center; gap: 5px; padding-right: 4px; color: #aaa; font-size: 9.5px; }
.ws-drop { width: 145px; height: 15px; background: #585858; display: flex; align-items: center; justify-content: space-between; padding: 0 7px 0 3px; }
.lock { fill: #ccc; }

/* status line */
.status { height: 25px; flex: none; display: flex; align-items: center; padding-left: 10px; }
.drop { width: 74px; height: 15px; background: #585858; display: flex; align-items: center; justify-content: space-between; padding: 0 3px 0 2px; font-size: 10px; }
.vsep { width: 1px; height: 16px; background: #888; margin: 0 9px 0 8px; }
.st-ico { width: 14px; height: 15px; fill: #ddd; margin-right: 4px; }
.st-right { margin-left: auto; display: flex; align-items: center; gap: 2px; padding-right: 2px; }
.sr-ico { width: 15px; height: 16px; fill: #ddd; display: block; }
.sr-on { background: #4d7f9f; padding: 2px; width: 18px; height: 21px; }

/* shelf */
.shelf { height: 53px; flex: none; display: flex; padding: 2px 0 4px 10px; gap: 0; }
.shelf-handle { width: 14px; background: #333; display: flex; flex-direction: column; align-items: center; padding-top: 8px; gap: 14px; flex: none; }
.shelf-handle i { width: 7px; height: 3px; background: #888; }
.shelf-handle b { width: 7px; height: 7px; border-radius: 50%; border: 2px solid #999; }
.shelf-main { flex: 1; display: flex; flex-direction: column; position: relative; padding-left: 0; }
.shelf-tabs { display: flex; gap: 18px; height: 15px; align-items: center; font-size: 10px; color: #888; margin-top: 1px; padding-left: 13px; background: #3c3c3c; }
.tab-on { color: #c8c8c8; }
.shelf-icons { display: flex; gap: 8px; height: 29px; align-items: center; padding-left: 11px; }
.shelf-icons svg { width: 18px; height: 24px; fill: none; stroke: #ddd; stroke-width: 1.5; }
.shelf-end { position: absolute; right: 5px; top: 18px; }
.shelf-end svg { fill: #bbb; }

/* main */
.main { height: 811px; flex: none; display: flex; }
.toolbox { width: 37px; flex: none; display: flex; flex-direction: column; align-items: flex-start; padding: 8px 0 4px 3px; }
.tool { width: 27px; height: 27.6px; display: flex; align-items: center; justify-content: center; }
.tool svg { width: 24px; height: 26px; }
.tool-on { background: #4c7a9c; }
.tb-sep { width: 27px; height: 1px; background: #bbb; margin-top: 59px; }
.pane { width: 21px; height: 21px; margin: 7px 0 0 3px; background: #c9c9c9; border: 1px solid #444; outline: 1px solid #c9c9c9; display: flex; align-items: center; justify-content: center; }
.pane svg { width: 16px; height: 11px; }
.pane-four { width: 22px; display: grid; grid-template-columns: 10px 10px; gap: 1px; margin: 7px 0 0 3px; }
.pane-four i, .pane-four b, .pane-two i, .pane-two b { height: 10px; border: 1px solid #bbb; font-size: 8px; line-height: 8px; text-align: center; font-weight: 400; color: #ccc; }
.pane-four b, .pane-two b { background: #c9c9c9; color: #333; }
.pane-two { width: 22px; display: grid; grid-template-columns: 10px 10px; gap: 1px; margin: 6px 0 0 3px; }
.pane-two i, .pane-two b { height: 21px; line-height: 19px; }
.tool-out { width: 27px; height: 27px; margin-top: 4px; background: #4c7a9c; padding: 2px; }
.tool-out svg { width: 23px; height: 23px; display: block; }
.ol-frame { fill: none; stroke: #9fc3da; }
.tb-rec { width: 34px; margin-left: -3px; height: 30px; margin-top: 3px; background: #333; display: flex; align-items: center; justify-content: center; }
.tb-rec i { width: 12px; height: 12px; background: #f0655a; }
.logo-m { margin-top: auto; width: 25px; height: 24px; fill: #2fb0c0; margin-left: 0; }

/* viewport */
.viewport { width: 1670px; height: 809px; margin-top: 1px; flex: none; display: flex; flex-direction: column; border: 1px solid #6c6c6c; background: #444; }
.vp-head { height: 30px; flex: none; padding-left: 5px; }
.vp-menu { display: flex; gap: 11px; height: 14px; align-items: center; }
.vp-tools { display: flex; gap: 1px; align-items: center; height: 15px; }
.vp-tools svg { width: 14px; height: 12px; fill: #ddd; }
.vsep2 { width: 1px; height: 11px; background: #bbb; margin-right: 4px; }
.vp-body { flex: 1; position: relative; overflow: hidden; background-color: #606060;
  background-image: linear-gradient(90deg, #4c4c4c 1px, transparent 1px), linear-gradient(#404040 1px, transparent 1px);
  background-size: 31.2px 100%, 100% 31.2px; background-position: 21.800px 0, 0 22px; }
.cube { position: absolute; left: 535px; top: 458px; width: 98px; height: 317px; background-color: #8f9b00;
  background-image: linear-gradient(90deg, rgba(50,50,0,.7) 1px, transparent 1px), linear-gradient(rgba(50,50,0,.7) 1px, transparent 1px);
  background-size: 31.2px 100%, 100% 31.2px; background-position: 17px 0, 0 2px; }
.scene { position: absolute; inset: 0; width: 100%; height: 100%; }
.vp-cam { position: absolute; left: 816px; top: 760px; color: #e8e8e8; font-size: 8.500px; font-weight: 700; }
.vp-frame { position: absolute; left: 1511px; top: 760px; display: flex; gap: 64px; color: #e8e8e8; font-size: 8.500px; }

/* right panel */
.panel { width: 194px; flex: none; margin-left: 4px; padding: 0 1px 0 4px; display: flex; flex-direction: column; }
.cb-icons { display: flex; justify-content: flex-end; gap: 3px; height: 15px; padding: 1px 0 0; margin-top: 1px; }
.cb-icons svg { width: 13px; height: 13px; }
.cb-menu { display: flex; gap: 11px; height: 15px; align-items: center; padding-left: 5px; font-size: 9px; }
.cb-name { height: 14px; line-height: 14px; font-weight: 700; color: #ccc; font-size: 9px; }
.cb-row { height: 12px; display: flex; justify-content: flex-end; align-items: center; font-size: 8.8px; }
.cb-l { flex: 1; text-align: right; padding-right: 4px; color: #a8a8a8; line-height: 12px; }
.cb-sel .cb-l { background: #4e89bb; color: #e6e6e6; height: 11px; line-height: 11px; }
.sw { width: 5px; height: 12px; background: #dd7b72; flex: none; }
.sw-d { background: #b5281f; }
.cb-v { width: 50px; background: #2c2c2c; color: #bbb; height: 12px; line-height: 12px; padding-left: 2px; flex: none; }
.cb-shapes { height: 13px; line-height: 13px; margin-top: 0; font-weight: 700; color: #bbb; font-size: 9px; }
.cb-shape { height: 12px; line-height: 12px; padding-left: 7px; font-weight: 700; background: #4b4b4b; color: #c0c0c0; font-size: 9px; }
.cb-empty { flex: 1; margin-top: 6px; background: #383838; }
.le { height: 241px; flex: none; margin-top: 2px; padding-top: 7px; display: flex; flex-direction: column; border-top: 1px solid #333; }
.le-tabs { display: flex; height: 14px; gap: 18px; align-items: center; padding-left: 8px; color: #888; background: #3b3b3b; }
.le-on { color: #ddd; font-weight: 500; }
.le-menu { display: flex; height: 14px; gap: 12px; align-items: center; padding-left: 7px; background: #3f3f3f; }
.le-icons { display: flex; justify-content: flex-end; gap: 6px; height: 16px; align-items: center; padding-right: 3px; background: #4b4b4b; }
.le-icons svg { width: 13px; height: 10px; }
.le-list { flex: 1; background: #2d2d2d; margin: 0 2px; }
.le-scroll { height: 14px; flex: none; display: flex; align-items: center; gap: 3px; padding: 0 4px; margin-bottom: 3px; }
.le-scroll b { width: 110px; height: 8px; background: #666; border-radius: 3px; }
.le-scroll .arr-r { margin-left: auto; }
.arr-l { width: 0; height: 0; border: 4px solid transparent; border-right: 4px solid #ccc; border-left: 0; flex: none; }
.arr-r { width: 0; height: 0; border: 4px solid transparent; border-left: 4px solid #ccc; border-right: 0; flex: none; }
.arr-u { width: 0; height: 0; border: 4px solid transparent; border-bottom: 4px solid #ccc; border-top: 0; flex: none; }
.arr-d { width: 0; height: 0; border: 4px solid transparent; border-top: 4px solid #ccc; border-bottom: 0; flex: none; }

.vtabs { width: 15px; flex: none; writing-mode: vertical-rl; display: flex; padding-top: 8px; gap: 18px; font-size: 8.600px; color: #8a8a8a; line-height: 15px; }
.vt-on { color: #ccc; }

/* time slider */
.timerow { height: 46px; margin-top: 4px; flex: none; display: flex; padding-left: 10px; }
.slider { width: 1688px; flex: none; background: #2a2a2a; display: flex; padding-left: 8px; overflow: hidden; position: relative; }
.slider::after { content: ""; position: absolute; left: 8px; bottom: 0; width: 1672px; height: 2px; background: #4b7c9e; }
.f { flex: 0 0 36.36px; position: relative; font-size: 10px; color: #7c7c7c; height: 44px; }
.f::before { content: ""; position: absolute; left: 0; top: 10px; bottom: 1px; width: 1px; background: #b0b0b0; }
.f em { position: absolute; left: 6px; top: 0; line-height: 12px; }
.k::after { content: ""; position: absolute; left: -1px; top: 0; width: 2px; height: 12px; background: #bf2a24; }
.cur { background: #666; }
.cur u { position: absolute; left: 6px; bottom: 2px; color: #eee; }
.playback { display: flex; margin-left: 6px; padding-top: 6px; align-items: flex-start; }
.frame-fld { width: 66px; height: 14px; line-height: 14px; }
.pb { width: 130px; height: 16px; margin: -2px 0 0 12px; fill: #c6c6c6; }
.pb-o { fill: #e09a55; }

/* range */
.rangerow { height: 20px; margin-top: 8px; flex: none; display: flex; align-items: center; padding-left: 11px; gap: 7px; white-space: nowrap; }
.range { width: 1209px; flex: none; height: 18px; margin-left: 6px; margin-right: 7px; background: #5c5c5c; display: flex; align-items: center; padding: 0 3px; gap: 3px; border-radius: 2px; color: #bbb; font-size: 9.5px; }
.hd { width: 10px; height: 12px; background: #9a9a9a; border-radius: 2px; }
.range-end { margin-left: auto; color: #aaa; }
.rsep { width: 2px; height: 16px; background: #9b9b9b; flex: none; }
.rsep-a { margin-left: -3px; }
.rsep-c { margin: 0 -2px 0 -1px; }
.mini { width: 0; flex: none; border-left: 3px solid transparent; border-right: 3px solid transparent; border-top: 3px solid #888; }
.mini-a { margin-left: 3px; }
.mini-b { margin-left: 2px; }
.lbl-box { width: 75px; flex: none; height: 17px; line-height: 17px; padding-left: 3px; background: #4b4b4b; color: #aaa; font-size: 9.5px; }
.fps { width: 71px; flex: none; height: 17px; margin-left: 3px; background: #5c5c5c; display: flex; justify-content: space-between; align-items: center; padding: 0 3px; color: #aaa; }
.rg-ico { width: 16px; height: 16px; display: block; flex: none; }
.rg-loop { margin-left: 1px; }
.rg-blue { width: 18px; height: 20px; flex: none; background: #4d7f9f; padding: 2px 1px; }
.rg-red { width: 18px; height: 20px; flex: none; background: #c84a44; padding: 2px 1px; }

/* command */
.cmdrow { height: 18px; margin-top: 8px; flex: none; display: flex; align-items: center; padding-left: 18px; }
.mel { width: 27px; font-weight: 500; font-size: 9.5px; color: #bbb; }
.cmd-in { width: 675px; height: 18px; background: #2c2c2c; }
.cmd-out { width: 1175px; height: 18px; margin-left: 3px; background: #2c2c2c; margin-right: 3px; }

.helprow { height: 18px; margin-top: 4px; flex: none; display: flex; align-items: center; padding-left: 18px; font-size: 8px; color: #9a9a9a; gap: 12px; }
.helprow span + span + span { margin-left: 9px; }

/* taskbar */
.taskbar { height: 30px; flex: none; background: #1b1b1b; display: flex; align-items: center; color: #eee; }
.tb-win { width: 13px; height: 13px; fill: #e8e8e8; margin-left: 12px; flex: none; }
.tb-search { margin-left: 11px; width: 258px; height: 30px; background: #f1f1f1; display: flex; align-items: center; gap: 7px; padding-left: 9px; color: #333; font-size: 10.500px; font-family: "Open Sans", sans-serif; }
.tb-search svg { fill: none; stroke: #333; stroke-width: 1.2; flex: none; }
.tb-apps { display: flex; margin-left: 0; }
.app-i { width: 36.8px; height: 30px; display: flex; align-items: center; justify-content: center; position: relative; }
.app-i svg { width: 19px; height: 19px; }
.app-i.on::after { content: ""; position: absolute; left: 3px; right: 3px; bottom: 0; height: 2px; background: #8cb3d6; }
.app-act { background: #3b3b3b; }
.app-mail b { position: absolute; left: 17px; top: 13px; font-size: 8px; font-weight: 500; color: #ddd; background: #222; border: 1px solid #aaa; border-radius: 8px; padding: 0 2px; line-height: 10px; }
.app-word b { width: 18px; height: 19px; background: #1d6fc4; color: #fff; font-size: 10px; line-height: 19px; text-align: center; }
.tray { margin-left: auto; display: flex; align-items: center; gap: 6px; padding-right: 12px; }
.tray svg { width: 12px; height: 13px; }
.eng { font-size: 9.5px; width: 20px; text-align: center; }
.clock { display: flex; flex-direction: column; align-items: center; font-size: 9.500px; line-height: 13px; width: 50px; white-space: nowrap; }
.notif { position: relative; width: 20px; margin-left: 3px; }
.notif svg { width: 14px; height: 15px; display: block; }
.notif b { position: absolute; left: 5px; top: 4px; font-size: 9px; font-weight: 400; background: #222; border: 1px solid #888; border-radius: 7px; padding: 0 1px; line-height: 10px; }

/* graph editor (floating window) */
.ge { position: absolute; left: 148px; top: 35px; width: 1436px; height: 462px; background: #444; display: flex; flex-direction: column; box-shadow: 0 1px 3px rgba(0,0,0,.5); }
.ge-title { height: 23px; flex: none; background: #fff; display: flex; align-items: center; color: #7a7a7a; font-size: 9.600px; padding-left: 5px; gap: 4px; }
.ge-btns { margin-left: auto; display: flex; margin-right: 0; }
.ge-btns svg { fill: none; stroke: #9a9a9a; }
.ge-menu { height: 18px; flex: none; display: flex; align-items: center; padding-left: 8px; gap: 10px; }
.ge-tools { height: 19px; flex: none; display: flex; align-items: flex-start; padding-left: 3px; gap: 1px; }
.ge-tools svg { width: 18px; height: 17px; fill: none; stroke: #a8694a; stroke-width: 1; display: block; flex: none; }
.ge-stats { margin: 0 4px 0 2px; font-size: 9.500px; color: #b0b0b0; line-height: 17px; }
.ge-f1 { width: 66px; height: 16px; background: #2d2d2d; margin-right: 5px; }
.ge-f2 { width: 69px; height: 16px; background: #2d2d2d; }
.g-sep { width: 1px; height: 17px; background: #666; margin: 0 2px 0 1px; }
.g4 { margin-left: 2px; }
.g5 { margin-left: 3px; }
.g7 { margin-left: 4px; }
.g-on { background: #4d7f9f; height: 18px; }
.g-dim { opacity: .35; }
.ge-tools-r { margin-left: auto; display: flex; gap: 0; padding-right: 2px; }
.wmove { fill: #ddd !important; stroke: none !important; }
.ge-body { flex: 1; display: flex; min-height: 0; }
.outl { width: 178px; flex: none; padding-left: 4px; display: flex; flex-direction: column; }
.search { height: 18px; flex: none; display: flex; align-items: center; gap: 7px; padding-left: 3px; margin: 3px 0 6px; }
.s-in { width: 147px; height: 18px; background: #383838; display: flex; align-items: center; justify-content: space-between; padding: 0 2px 0 2px; color: #8a8a8a; font-size: 10px; }
.ol-wrap { flex: 1; display: flex; min-height: 0; gap: 1px; }
.ol-list { width: 159px; flex: none; background: #3b3b3b; }
.ol-head { height: 15px; display: flex; align-items: center; gap: 3px; padding-left: 1px; background: linear-gradient(90deg,#3d4f60,#40566b); color: #c4c4c4; font-size: 9.500px; }
.ex { font-size: 10px; color: #9ab; width: 9px; }
.ol-row { height: 15px; display: flex; align-items: center; font-style: italic; font-size: 8.200px; }
.plug { width: 7px; height: 6px; background: #ddd; margin-left: 23px; position: relative; flex: none; }
.plug::after { content: ""; position: absolute; left: 7px; top: 2px; width: 3px; height: 1px; background: #ddd; }
.ol-row span { margin-left: 31px; }
.tx { color: #b34c4c; }
.ty { color: #3d8a4f; }
.tz { color: #f0f0f0; background: #4b86b9; }
.rz { color: #5a7eb5; }
.ol-vs { width: 8px; display: flex; flex-direction: column; align-items: center; gap: 2px; }
.ol-vs b { flex: 1; width: 6px; background: #5b5b5b; border-radius: 2px; }
.ol-hs { height: 18px; flex: none; display: flex; align-items: center; gap: 2px; padding-left: 1px; background: #3b3b3b; width: 168px; }
.ol-hs b { width: 139px; height: 8px; background: #666; border-radius: 3px; margin: 0 3px; }

.graph { width: 1255px; flex: none; display: flex; flex-direction: column; }
.ruler { height: 18px; flex: none; display: flex; position: relative; padding-left: 4px; overflow: hidden; background-color: #2a2a2a;
  background-image: repeating-linear-gradient(90deg, #5a5a5a 0 1px, transparent 1px 8.11px); background-size: 100% 4px; background-repeat: no-repeat; background-position: 4px 100%; }
.ruler span { flex: 0 0 40.55px; border-left: 1px solid #555; padding-left: 2px; font-size: 8px; color: #666; line-height: 13px; }
.tag { position: absolute; top: 0; background: #000; color: #ddd; font-size: 8px; font-weight: 400; clip-path: polygon(0 0,100% 0,100% 60%,0 100%); height: 15px; line-height: 11px; text-align: center; }
.tag0 { left: 443px; width: 7px; }
.tag45 { left: 815px; width: 11px; }
.marker { position: absolute; left: 490px; top: 0; width: 19px; height: 17px; background: #f5ea1c; color: #111; font-size: 9px; font-weight: 700; text-align: center; line-height: 12px; clip-path: polygon(0 0,100% 0,100% 60%,50% 100%,0 60%); }
.plot { flex: 1; position: relative; overflow: hidden; background-color: #282828;
  background-image: linear-gradient(rgba(255,255,255,.07) 1px, transparent 1px), linear-gradient(90deg, #282828 450px, #3a3a3a 450px, #3a3a3a 815px, #282828 815px);
  background-size: 100% 25.250px, 100% 100%; background-position: 0 23px, 0 0; }
.yaxis { position: absolute; left: 0; top: 6.400px; width: 27px; display: flex; flex-direction: column; align-items: flex-end; color: #6f6f6f; font-size: 10px; }
.yaxis span { height: 25.200px; line-height: 25.200px; }
.curve { position: absolute; inset: 0; width: 100%; height: 100%; fill: none; }

/* overlays */
.wm { position: absolute; inset: 0; width: 1920px; height: 1080px; pointer-events: none; }
.wm-g text { font-family: "Noto Sans CJK SC", sans-serif; font-size: 29px; font-weight: 400; fill: rgba(255,255,255,.07); text-anchor: middle; dominant-baseline: central; }
.stamp-url { position: absolute; left: 876px; top: 10px; font-family: "Open Sans", sans-serif; font-size: 29px; font-weight: 700; color: rgba(205,205,205,.5); line-height: 34px; letter-spacing: -.6px; }
.stamp-brand { position: absolute; left: 868px; top: 1024px; display: flex; align-items: center; gap: 15px; font-family: "Noto Sans CJK SC", sans-serif; font-size: 31px; font-weight: 700; color: rgba(205,205,205,.75); letter-spacing: 1px; }
```
